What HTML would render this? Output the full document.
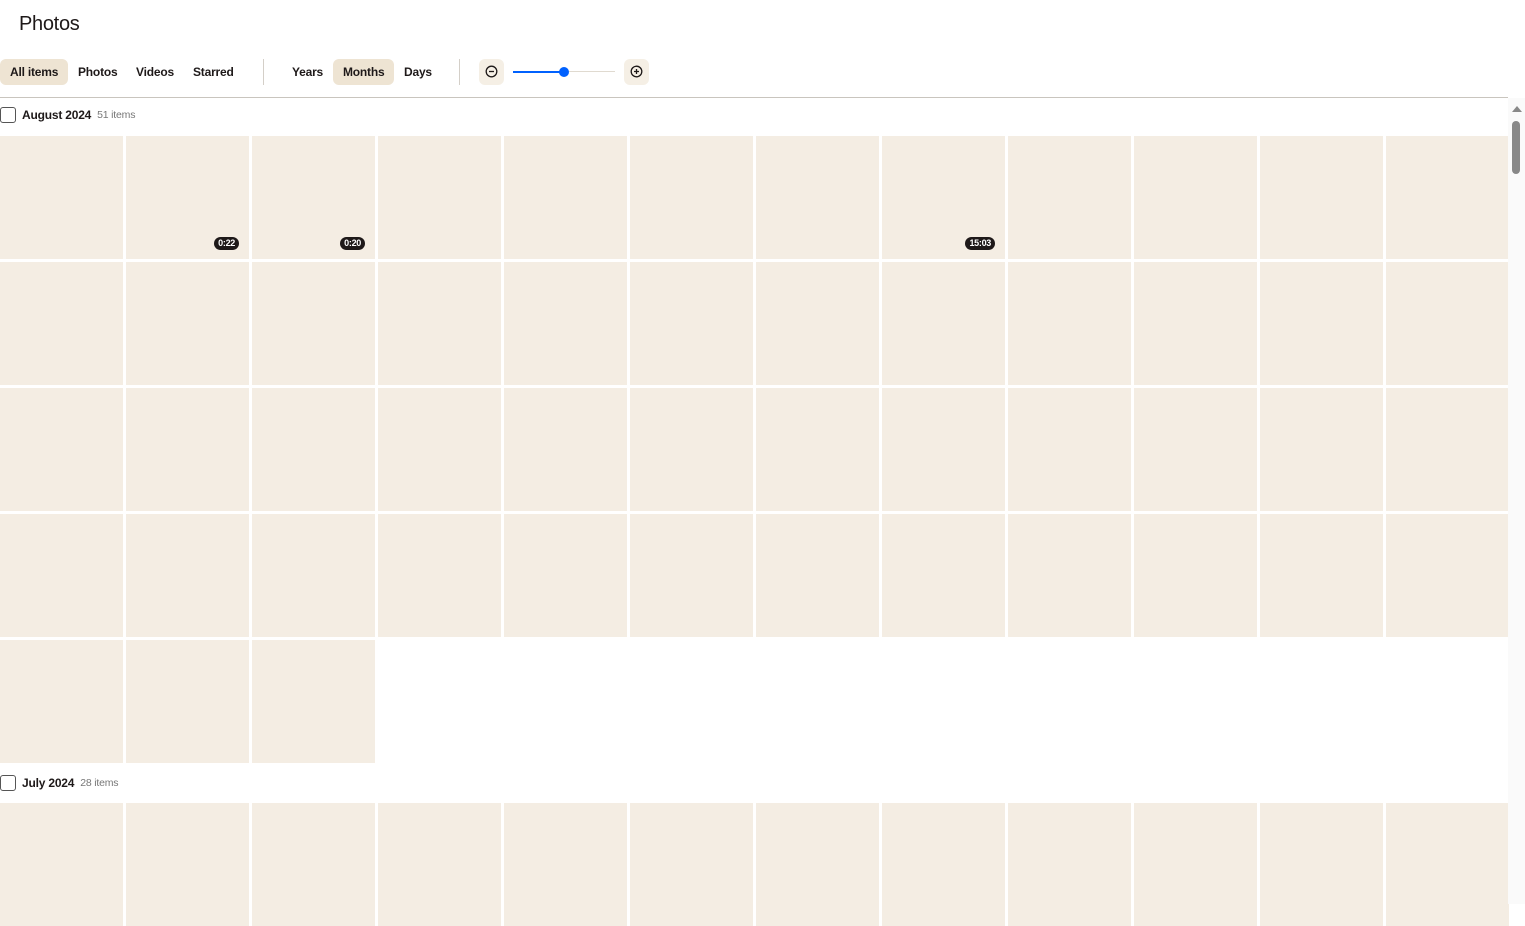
<!DOCTYPE html>
<html><head><meta charset="utf-8"><style>
*{box-sizing:border-box;margin:0;padding:0}
body{width:1525px;height:904px;overflow:hidden;background:#fff;font-family:"Liberation Sans",sans-serif;color:#1e1919;position:relative}
h1{position:absolute;left:19px;top:13px;font-size:20px;font-weight:400;letter-spacing:-0.3px}
.btn{position:absolute;top:59px;height:26px;line-height:26px;font-size:12px;font-weight:700;padding:0 10px;border-radius:6px;color:#1e1919;letter-spacing:-0.2px}
.sel{background:#eee4d3}
.sep{position:absolute;top:59px;width:1px;height:26px;background:#d4cfc8}
.ib{position:absolute;top:59px;width:25px;height:26px;border-radius:6px;background:#f5efe5}
.ib svg{position:absolute;left:6px;top:6px}
.line{position:absolute;left:0;top:97px;width:1508px;height:1px;background:#c9c5be}
.hdr{position:absolute;left:0;font-size:12px;font-weight:700;display:flex;align-items:center;letter-spacing:-0.2px}
.cb{width:16px;height:16px;border:1.5px solid #555;border-radius:3px;margin-right:6px}
.cnt{font-weight:400;color:#777;font-size:10.5px;margin-left:6px}
.grid{position:absolute;left:0;display:grid;grid-template-columns:repeat(12,123px);grid-auto-rows:123px;gap:3px}
.grid div{background:#f4ede3;position:relative}
.b{position:absolute;right:10px;bottom:9px;background:#1e1919;color:#fff;font-size:9px;font-weight:700;border-radius:7px;padding:1px 4px;line-height:11px;letter-spacing:-0.3px}
.sb{position:absolute;left:1508px;top:98px;width:17px;height:806px;background:#fafafa}
</style></head><body>
<h1>Photos</h1>
<div class="btn sel" style="left:0">All items</div>
<div class="btn" style="left:68px">Photos</div>
<div class="btn" style="left:126px">Videos</div>
<div class="btn" style="left:183px">Starred</div>
<div class="sep" style="left:263px"></div>
<div class="btn" style="left:282px">Years</div>
<div class="btn sel" style="left:333px">Months</div>
<div class="btn" style="left:394px">Days</div>
<div class="sep" style="left:459px"></div>
<div class="ib" style="left:479px"><svg width="13" height="13" viewBox="0 0 13 13"><circle cx="6.5" cy="6.5" r="5.3" fill="none" stroke="#1e1919" stroke-width="1.3"/><path d="M4 6.5h5" stroke="#1e1919" stroke-width="1.3"/></svg></div>
<div style="position:absolute;left:513px;top:71px;width:51px;height:2px;background:#0061fe"></div>
<div style="position:absolute;left:564px;top:71px;width:51px;height:1px;background:#e0dad0"></div>
<div style="position:absolute;left:559px;top:67px;width:10px;height:10px;border-radius:50%;background:#0061fe"></div>
<div class="ib" style="left:624px"><svg width="13" height="13" viewBox="0 0 13 13"><circle cx="6.5" cy="6.5" r="5.3" fill="none" stroke="#1e1919" stroke-width="1.3"/><path d="M4 6.5h5M6.5 4v5" stroke="#1e1919" stroke-width="1.3"/></svg></div>
<div class="line"></div>
<div class="hdr" style="top:107px"><span class="cb"></span>August 2024<span class="cnt">51 items</span></div>
<div class="grid" style="top:136px">
<div></div><div><span class="b">0:22</span></div><div><span class="b">0:20</span></div><div></div><div></div><div></div><div></div><div><span class="b">15:03</span></div><div></div><div></div><div></div><div></div>
<div></div><div></div><div></div><div></div><div></div><div></div><div></div><div></div><div></div><div></div><div></div><div></div>
<div></div><div></div><div></div><div></div><div></div><div></div><div></div><div></div><div></div><div></div><div></div><div></div>
<div></div><div></div><div></div><div></div><div></div><div></div><div></div><div></div><div></div><div></div><div></div><div></div>
<div></div><div></div><div></div>
</div>
<div class="hdr" style="top:775px"><span class="cb"></span>July 2024<span class="cnt">28 items</span></div>
<div class="grid" style="top:803px">
<div></div><div></div><div></div><div></div><div></div><div></div><div></div><div></div><div></div><div></div><div></div><div></div>
</div>
<div class="sb"><div style="position:absolute;left:4px;top:8px;width:0;height:0;border-left:5px solid transparent;border-right:5px solid transparent;border-bottom:6px solid #888"></div><div style="position:absolute;left:4px;top:23px;width:8px;height:53px;border-radius:4px;background:#888"></div></div>
</body></html>
